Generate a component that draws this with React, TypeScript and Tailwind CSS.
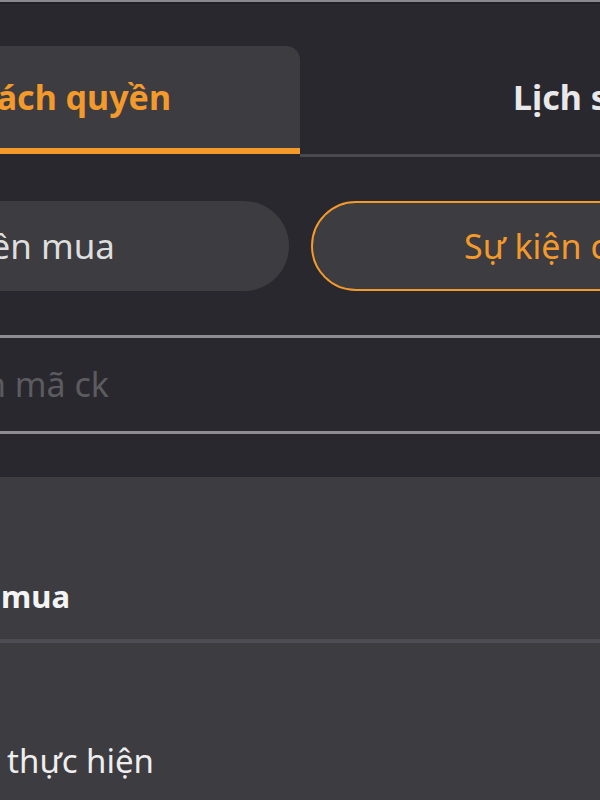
import React from 'react';

const orange = 'text-[#f39a2b]';

export default function App() {
  return (
    <div
      className="w-[600px] h-[800px] overflow-hidden bg-[#29282e] flex flex-col"
      style={{ fontFamily: '"Noto Sans", "Open Sans", sans-serif' }}
    >
      <div className="h-[2px] shrink-0 bg-[#8a898e]" />
      <div className="h-[2px] shrink-0 bg-[#222127]" />

      {/* tabs */}
      <div className="mt-[42px] flex shrink-0">
        <div className="w-[300px] shrink-0 flex flex-col">
          <div className="h-[102px] bg-[#3d3c41] rounded-tr-[14px] flex items-center justify-end pr-[129px] whitespace-nowrap">
            <span className={`text-[34px] font-bold ${orange}`}>Danh sách quyền</span>
          </div>
          <div className="h-[6px] bg-[#f39a2b]" />
          <div className="h-[3px]" />
        </div>
        <div className="flex-1 flex flex-col">
          <div className="h-[102px] flex items-center pl-[213px] whitespace-nowrap">
            <span className="text-[34px] font-bold text-[#e8e8ea]">Lịch sử đăng ký</span>
          </div>
          <div className="h-[6px]" />
          <div className="h-[3px] bg-[#4a494f]" />
        </div>
      </div>

      {/* filter pills */}
      <div className="mt-[44px] h-[90px] shrink-0 flex gap-[22px]">
        <div className="-ml-[80px] w-[369px] shrink-0 rounded-full bg-[#3d3c41] flex items-center justify-end pr-[174px] whitespace-nowrap">
          <span className="text-[35px] text-[#dededf]">Quyền mua</span>
        </div>
        <div className="w-[420px] shrink-0 rounded-full border-2 border-[#f39a2b] bg-[#3d3c41] flex items-center pl-[151px] whitespace-nowrap">
          <span className={`text-[34px] ${orange}`}>Sự kiện chia cổ tức</span>
        </div>
      </div>

      {/* search */}
      <div className="mt-[44px] h-[99px] shrink-0 border-y-[3px] border-[#8d8c91] flex items-center">
        <div className="w-[109px] shrink-0 flex justify-end whitespace-nowrap">
          <span className="text-[34px] text-[#5c5b60]">Tìm kiếm mã ck</span>
        </div>
      </div>

      {/* list */}
      <div className="mt-[43px] flex-1 bg-[#3d3c41] flex flex-col">
        <div className="h-[162px] shrink-0 pt-[96px] flex">
          <div className="w-[70px] shrink-0 flex justify-end whitespace-nowrap">
            <span className="text-[31px] font-bold text-[#f4f4f5]">Đăng ký quyền mua</span>
          </div>
        </div>
        <div className="h-[4px] shrink-0 bg-[#4e4d53]" />
        <div className="pt-[93px] flex">
          <div className="w-[154px] shrink-0 flex justify-end whitespace-nowrap">
            <span className="text-[33px] text-[#eeeeef]">Lịch sử thực hiện</span>
          </div>
        </div>
      </div>
    </div>
  );
}
